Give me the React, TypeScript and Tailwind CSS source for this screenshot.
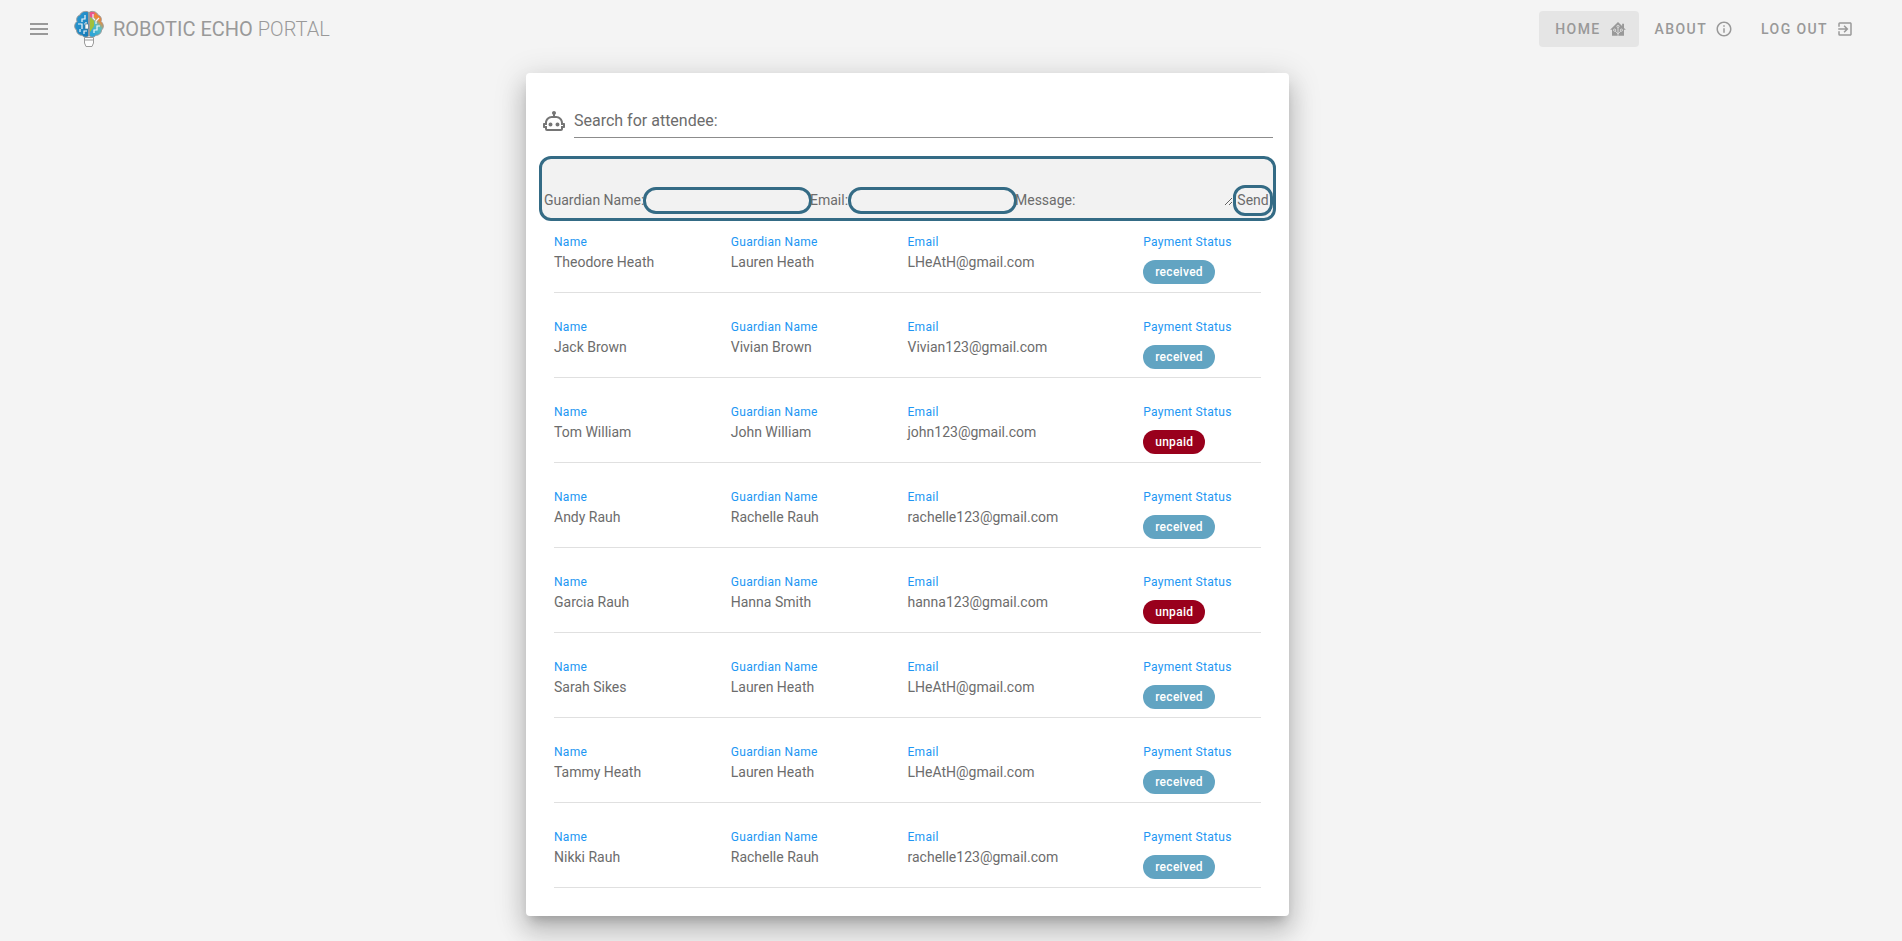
import React from "react";
import { MdExitToApp, MdInfoOutline, MdMenu } from "react-icons/md";

type Attendee = {
  name: string;
  guardian: string;
  email: string;
  status: "received" | "unpaid";
};

const attendees: Attendee[] = [
  { name: "Theodore Heath", guardian: "Lauren Heath", email: "LHeAtH@gmail.com", status: "received" },
  { name: "Jack Brown", guardian: "Vivian Brown", email: "Vivian123@gmail.com", status: "received" },
  { name: "Tom William", guardian: "John William", email: "john123@gmail.com", status: "unpaid" },
  { name: "Andy Rauh", guardian: "Rachelle Rauh", email: "rachelle123@gmail.com", status: "received" },
  { name: "Garcia Rauh", guardian: "Hanna Smith", email: "hanna123@gmail.com", status: "unpaid" },
  { name: "Sarah Sikes", guardian: "Lauren Heath", email: "LHeAtH@gmail.com", status: "received" },
  { name: "Tammy Heath", guardian: "Lauren Heath", email: "LHeAtH@gmail.com", status: "received" },
  { name: "Nikki Rauh", guardian: "Rachelle Rauh", email: "rachelle123@gmail.com", status: "received" },
];

function HomeCircuitIcon() {
  return (
    <svg viewBox="0 0 24 24" className="size-[18px]" aria-hidden="true">
      <path fill="currentColor" d="M12 2.500 1.500 13H4v8h16v-8h2.500L20 10.500V5h-2.500v3z" />
      <g fill="none" stroke="#e5e5e5" strokeWidth="1.100">
        <path d="M12 21v-11M12 18.500l-3.700-3.700M12 18.500l3.700-3.700" />
        <circle cx="12" cy="8.500" r="1.500" />
        <circle cx="7.500" cy="13.500" r="1.500" />
        <circle cx="16.500" cy="13.500" r="1.500" />
      </g>
    </svg>
  );
}

function RobotIcon() {
  return (
    <svg viewBox="0 0 24 24" className="size-6 shrink-0 text-[#757575]" aria-hidden="true">
      <path
        fill="currentColor"
        d="M17.500 15.500a2 2 0 1 1-4 0 2 2 0 0 1 4 0M8.500 13.500a2 2 0 1 0 0 4 2 2 0 0 0 0-4M23 15v3c0 .550-.450 1-1 1h-1v1c0 1.110-.890 2-2 2H5a2 2 0 0 1-2-2v-1H2c-.550 0-1-.450-1-1v-3c0-.550.450-1 1-1h1c0-3.870 3.130-7 7-7h1V5.730c-.600-.340-1-.990-1-1.730 0-1.100.900-2 2-2s2 .900 2 2c0 .740-.400 1.390-1 1.730V7h1c3.870 0 7 3.130 7 7h1c.550 0 1 .450 1 1m-2 1h-2v-2c0-2.760-2.240-5-5-5h-4c-2.760 0-5 2.240-5 5v2H3v1h2v3h14v-3h2z"
      />
    </svg>
  );
}

function BrainBulbLogo() {
  return (
    <svg viewBox="0 0 30 38" className="h-[38px] w-[30px]" aria-hidden="true">
      <defs>
        <linearGradient id="leftBrain" x1="0" y1="0" x2="1" y2="1">
          <stop offset="0" stopColor="#2c9fd8" />
          <stop offset="1" stopColor="#1678b5" />
        </linearGradient>
        <linearGradient id="rightBrain" x1="1" y1="0" x2=".5" y2="1">
          <stop offset="0" stopColor="#e8703a" />
          <stop offset=".4" stopColor="#ee8a35" />
          <stop offset=".6" stopColor="#5dbfc0" />
          <stop offset="1" stopColor="#2fa6d6" />
        </linearGradient>
      </defs>
      <path
        d="M14.500 2C11 .500 7 2 6 5 3 6 2 9 3 11.500 0 14 0 18 2.500 20c0 3.500 3 5.500 5.500 5.200 2 2.600 5 2.300 6.500.800z"
        fill="url(#leftBrain)"
        stroke="#9a9a9a"
      />
      <path
        d="M15.500 2c3.500-1.500 7.500 0 8.500 3 3 1 4 4 3 6.500 3 2.500 3 6.500.500 8.500 0 3.500-3 5.500-5.500 5.200-2 2.600-5 2.300-6.500.800z"
        fill="url(#rightBrain)"
        stroke="#9a9a9a"
      />
      <path d="M16 2.500c2-.800 4-.500 5 .500l-2 5-3-1z" fill="#e8558f" />
      <path d="M16 7l4 4v5l-4 6z" fill="#a2c03a" />
      <g fill="none" stroke="#f1f6f8" strokeWidth="1.200">
        <path d="M11 5v4H8v3M4 14h4v5M12 12v2h-2M13 21h-3v3M6 22v-3M19 4v4l2 2M25 8l-3 3v3M26 16h-3v4h-3v3" />
      </g>
      <path d="M11 14h3.500v5H11z" fill="#fafafa" stroke="#4b7790" strokeWidth=".700" />
      <path
        d="M10.500 27.500h9V33l-1.500 3.500h-6L10.500 33zM10.500 30h9"
        fill="#fdfdfd"
        stroke="#9b9b9b"
        strokeLinejoin="round"
      />
    </svg>
  );
}

const navItem =
  "flex h-9 items-center gap-2 rounded pr-3 pl-4 text-sm font-medium tracking-widest text-[#999]";
const fieldBox =
  "mb-1 h-[27px] w-[169px] shrink-0 rounded-[13px] border-3 border-[#346b85] bg-[#f2f2f2] px-2 text-sm text-[#6c6c6c] outline-none";

function Field({ label, children }: { label: string; children: React.ReactNode }) {
  return (
    <div className="min-w-0">
      <dt className="text-xs leading-5 tracking-wide text-[#2196f3]">{label}</dt>
      <dd className="text-sm leading-5 text-[#6c6c6c]">{children}</dd>
    </div>
  );
}

function AttendeeRow({ attendee }: { attendee: Attendee }) {
  return (
    <li className="h-[85px] border-b border-[#e0e0e0] pt-6">
      <dl className="grid grid-cols-[3fr_3fr_4fr_2fr]">
        <Field label="Name">{attendee.name}</Field>
        <Field label="Guardian Name">{attendee.guardian}</Field>
        <Field label="Email">{attendee.email}</Field>
        <Field label="Payment Status">
          <span
            className={
              attendee.status === "received"
                ? "mt-2 inline-block rounded-full bg-[#62a4c2] px-3 text-xs leading-6 font-medium tracking-wide text-white"
                : "mt-2 inline-block rounded-full bg-[#99001c] px-3 text-xs leading-6 font-medium tracking-wide text-white"
            }
          >
            {attendee.status}
          </span>
        </Field>
      </dl>
    </li>
  );
}

export default function App() {
  return (
    <div className="min-h-screen bg-[#f4f4f4] pb-[25px] font-[Roboto,sans-serif]">
      <header className="flex h-[58px] items-center pr-9 pl-[27px] text-[#999]">
        <button type="button" aria-label="Menu" className="mr-[23px]">
          <MdMenu className="size-6" />
        </button>
        <BrainBulbLogo />
        <h1 className="ml-[9px] text-xl">
          ROBOTIC ECHO <span className="font-light">PORTAL</span>
        </h1>
        <nav className="ml-auto flex">
          <a href="#home" className={navItem + " bg-[#e5e5e5]"}>
            HOME
            <HomeCircuitIcon />
          </a>
          <a href="#about" className={navItem}>
            ABOUT
            <MdInfoOutline className="size-[18px]" />
          </a>
          <a href="#logout" className={navItem}>
            LOG OUT
            <MdExitToApp className="size-[18px]" />
          </a>
        </nav>
      </header>

      <div className="grid grid-cols-[526fr_763fr_613fr] pt-[15px]">
        <main className="col-start-2 min-w-0 rounded bg-white pb-7 shadow-[0_8px_10px_-5px_rgba(0,0,0,0.2),0_16px_24px_2px_rgba(0,0,0,0.14),0_6px_30px_5px_rgba(0,0,0,0.12)]">
          <div className="flex items-center gap-2 pt-[31px] pr-4 pl-4">
            <RobotIcon />
            <input
              type="text"
              aria-label="Search for attendee"
              placeholder="Search for attendee:"
              className="h-[34px] min-w-0 flex-1 border-b border-[#8c8c8c] text-base text-[#6c6c6c] outline-none placeholder:text-[#6c6c6c]"
            />
          </div>

          <form className="mx-[13px] mt-[18px] flex h-[65px] items-end rounded-xl border-3 border-[#346b85] bg-[#f2f2f2] pl-0.5 text-sm text-[#6c6c6c]">
            <label htmlFor="guardian" className="w-[99px] shrink-0 pb-2 whitespace-nowrap">
              Guardian Name:
            </label>
            <input id="guardian" type="text" className={fieldBox} />
            <label htmlFor="email" className="-ml-0.5 w-[38px] shrink-0 pb-2">
              Email:
            </label>
            <input id="email" type="email" className={fieldBox} />
            <label htmlFor="message" className="-ml-0.5 shrink-0 pb-2">
              Message:
            </label>
            <textarea
              id="message"
              rows={1}
              className="mb-3 h-5 min-w-0 flex-1 resize overflow-hidden bg-transparent outline-none"
            />
            <button
              type="button"
              className="mb-0.5 h-[31px] w-[40px] shrink-0 rounded-xl border-3 border-[#346b85] pb-0.5 text-center"
            >
              Send
            </button>
          </form>

          <ul className="mx-7 -mt-[13px]">
            {attendees.map((attendee) => (
              <AttendeeRow key={attendee.name} attendee={attendee} />
            ))}
          </ul>
        </main>
      </div>
    </div>
  );
}
